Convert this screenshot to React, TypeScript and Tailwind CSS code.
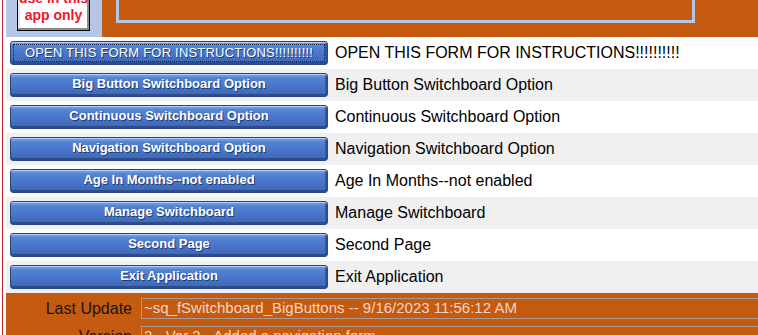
import React from 'react';

const rows = [
  'OPEN THIS FORM FOR INSTRUCTIONS!!!!!!!!!!',
  'Big Button Switchboard Option',
  'Continuous Switchboard Option',
  'Navigation Switchboard Option',
  'Age In Months--not enabled',
  'Manage Switchboard',
  'Second Page',
  'Exit Application',
];

const font = { fontFamily: '"Liberation Sans", Arial, sans-serif' };

function SwitchButton({ label, focused }: { label: string; focused?: boolean }) {
  return (
    <div className="flex h-[24px] w-[318px] rounded-[3px] border border-[#2a4680] bg-[linear-gradient(to_bottom,#86a8e8_0%,#5582d4_18%,#4774c6_60%,#3d66b4_100%)] shadow-[inset_0_1px_0_#b4cdf5,inset_0_-2px_0_#2c4c8c,inset_-2px_0_0_#34579a]">
      {focused ? (
        <div className="m-[2px] flex flex-1 items-center justify-center border border-dotted border-[#13244a] text-[13px] tracking-[0.2px] text-white [text-shadow:1px_1px_0_#1e3a70]">
          {label}
        </div>
      ) : (
        <div className="flex flex-1 items-center justify-center pb-[3px] text-[13px] font-bold text-white [text-shadow:1px_1px_0_#1e3a70]">
          {label}
        </div>
      )}
    </div>
  );
}

export default function App() {
  return (
    <div className="flex h-[335px] w-[758px] overflow-hidden bg-white" style={font}>
      <div className="w-[2px]" />
      <div className="w-px bg-[#c8262e]" />
      <div className="w-[3px]" />
      <div className="flex flex-1 flex-col">
        <div className="flex h-[37px] shrink-0">
          <div className="flex w-[96px] items-end bg-[#b4c7e7] pb-[6px] pl-[11px]">
            <div className="flex h-[44px] w-[73px] flex-col items-center justify-end border border-black bg-white pb-[6px] text-[14px] font-bold leading-[17px] text-[#f0142c] shadow-[inset_-2px_-2px_0_#8a8a8a,inset_2px_2px_0_#e8e8e8]">
              <span>use in this</span>
              <span>app only</span>
            </div>
          </div>
          <div className="flex flex-1 items-start bg-[#c55a11] pl-[14px]">
            <div className="h-[23px] w-[579px] border-x-[3px] border-b-[3px] border-[#b4c7e7]" />
          </div>
        </div>
        {rows.map((r, i) => (
          <div
            key={r}
            className={`flex h-[32px] shrink-0 items-center gap-[7px] pl-[4px] ${i % 2 ? 'bg-[#f0f0f0]' : 'bg-white'}`}
          >
            <SwitchButton label={r} focused={i === 0} />
            <span className="text-[16px] text-black">{r}</span>
          </div>
        ))}
        <div className="flex flex-1 flex-col gap-[7px] bg-[#c55a11] pt-[5px]">
          <div className="flex h-[21px] items-center gap-[9px]">
            <span className="w-[126px] text-right text-[16px] text-[#1a1410]">Last Update</span>
            <div className="flex h-[21px] flex-1 items-center border border-r-0 border-[#a89c94] pl-[2px] text-[15px] text-[#f3d6c6]">
              ~sq_fSwitchboard_BigButtons -- 9/16/2023 11:56:12 AM
            </div>
          </div>
          <div className="flex h-[21px] items-center gap-[9px]">
            <span className="w-[126px] text-right text-[16px] text-[#1a1410]">Version</span>
            <div className="flex h-[21px] flex-1 items-center border border-r-0 border-[#a89c94] pl-[2px] text-[15px] text-[#f3d6c6]">
              2 - Ver 2 - Added a navigation form
            </div>
          </div>
        </div>
      </div>
    </div>
  );
}
